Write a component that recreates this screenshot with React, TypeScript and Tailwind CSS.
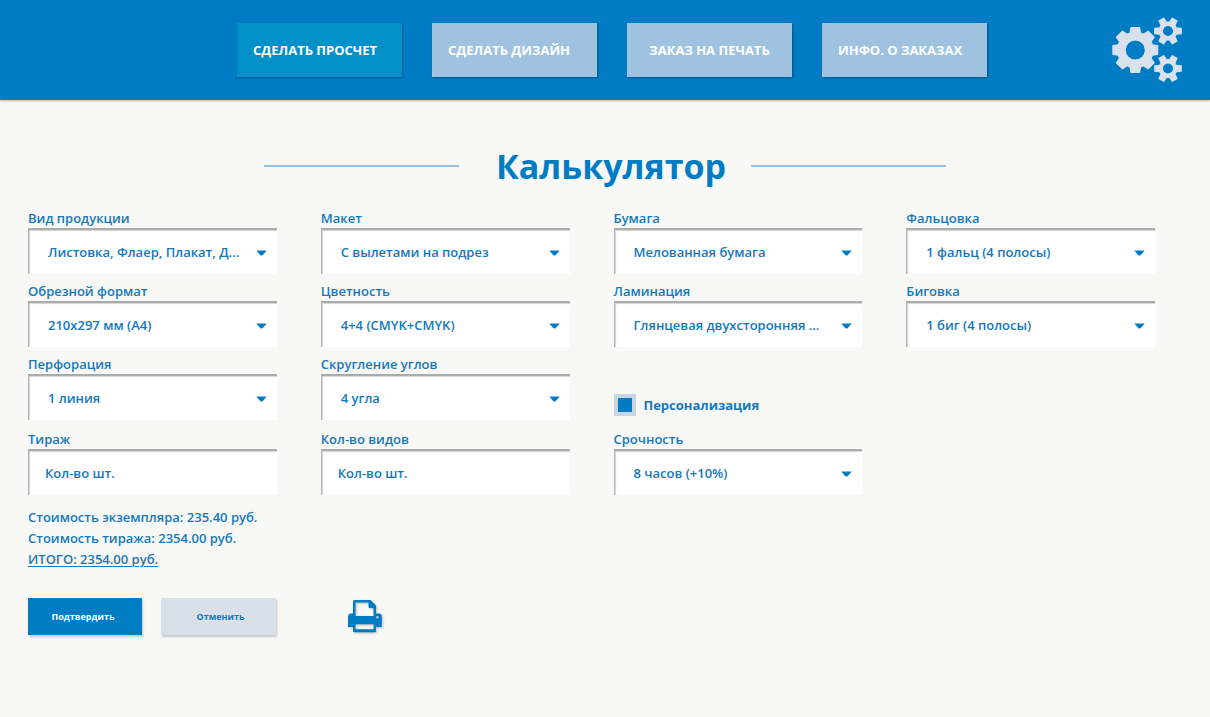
import React, { useId } from "react";

type Point = [number, number];

function gearPath(
  cx: number,
  cy: number,
  teeth: number,
  outer: number,
  body: number,
  tip: number,
  base: number,
  hole: number,
): string {
  const at = (r: number, a: number): Point => [
    cx + r * Math.cos(a),
    cy + r * Math.sin(a),
  ];
  const fmt = ([x, y]: Point) => `${x.toFixed(2)} ${y.toFixed(2)}`;
  const step = (Math.PI * 2) / teeth;
  let d = "";
  for (let i = 0; i < teeth; i++) {
    const a = i * step;
    const baseStart = fmt(at(body, a - base));
    d += i === 0 ? `M${baseStart}` : `A${body} ${body} 0 0 1 ${baseStart}`;
    d += `L${fmt(at(outer, a - tip))}L${fmt(at(outer, a + tip))}L${fmt(at(body, a + base))}`;
  }
  d += `A${body} ${body} 0 0 1 ${fmt(at(body, -base))}Z`;
  d += `M${cx - hole} ${cy}a${hole} ${hole} 0 1 0 ${hole * 2} 0a${hole} ${hole} 0 1 0 ${-hole * 2} 0Z`;
  return d;
}

function Gears() {
  return (
    <svg
      viewBox="0 0 70 66"
      className="h-[66px] w-[70px] fill-[#d8e1ec] stroke-[#d8e1ec]"
      strokeWidth="1.2"
      strokeLinejoin="round"
      fillRule="evenodd"
      aria-hidden="true"
    >
      <path d={gearPath(23.3, 33, 8, 22.8, 17.8, 0.19, 0.3, 10.1)} />
      <path d={gearPath(56, 14, 6, 13.5, 8.8, 0.2, 0.36, 5.6)} />
      <path d={gearPath(56, 51.5, 6, 13.5, 8.8, 0.2, 0.36, 5.6)} />
    </svg>
  );
}

function PrinterIcon() {
  return (
    <svg
      viewBox="0 0 34 33"
      className="h-[33px] w-[34px] fill-[#007cc5] drop-shadow-[1px_1px_1px_rgba(0,0,0,0.25)]"
      fillRule="evenodd"
      aria-hidden="true"
    >
      <path d="M6.5 0H22.500L28 5.500V13.600H30.500A3.300 3.300 0 0 1 33.800 17V27H28V30.800Q28 32.300 26.500 32.300H6.500Q5 32.300 5 30.800V27H0V17A3.300 3.300 0 0 1 3.300 13.600H5V1.500Q5 0 6.500 0ZM7.500 2.500V16H25.500V8H22Q20.500 8 20.500 6.500V2.500ZM7.500 24.300V29.300H25.500V24.300ZM29.400 16a1.300 1.300 0 1 0 0 2.600a1.300 1.300 0 1 0 0-2.600Z" />
    </svg>
  );
}

const fieldBox =
  "block h-[46px] w-full appearance-none rounded-none border-l border-t-2 border-l-[#b4b4b4] border-t-[#ababab] bg-white font-semibold text-[#1478bd] shadow-[inset_1px_1px_1px_#d4d4d4] outline-none";

function SelectField({ label, value }: { label: string; value: string }) {
  const id = useId();
  return (
    <div>
      <label htmlFor={id} className="block h-5 leading-5">
        {label}
      </label>
      <div className="relative">
        <select id={id} className={`${fieldBox} pl-[19px] pr-7 pt-0.5`}>
          <option>{value}</option>
        </select>
        <svg
          viewBox="0 0 11 6"
          className="pointer-events-none absolute right-2.5 top-[22px] h-1.5 w-[11px] fill-[#007cc5]"
          aria-hidden="true"
        >
          <path d="M0.300 0.500H10.700Q9 2.600 6.800 4.900Q5.500 6 4.200 4.900Q2 2.600 0.300 0.500Z" />
        </svg>
      </div>
    </div>
  );
}

function TextField({ label, placeholder }: { label: string; placeholder: string }) {
  const id = useId();
  return (
    <div>
      <label htmlFor={id} className="block h-5 leading-5">
        {label}
      </label>
      <input
        id={id}
        type="text"
        placeholder={placeholder}
        className={`${fieldBox} px-4 placeholder:text-[#1478bd] placeholder:opacity-100`}
      />
    </div>
  );
}

const navItem =
  "flex h-[54px] w-[165px] items-center whitespace-nowrap pt-0.5 text-[13px] font-bold text-white shadow-[1px_1px_2px_rgba(0,0,0,0.3)]";

export default function App() {
  return (
    <div className="min-h-screen bg-[#f8f8f6] font-['Open_Sans','Noto_Sans',sans-serif] text-[13px] font-semibold text-[#1478bd]">
      <header className="grid h-[100px] grid-cols-[1fr_auto_1fr] items-center bg-[#007cc5] shadow-[0_1px_2px_rgba(0,0,0,0.3)]">
        <nav className="col-start-2 flex gap-[30px] pl-3.5">
          <a href="#quote" aria-current="page" className={`${navItem} bg-[#0390c8] pl-4`}>
            СДЕЛАТЬ ПРОСЧЕТ
          </a>
          <a href="#design" className={`${navItem} bg-[#a0c2e1] pl-4`}>
            СДЕЛАТЬ ДИЗАЙН
          </a>
          <a href="#print" className={`${navItem} justify-center bg-[#a0c2e1]`}>
            ЗАКАЗ НА ПЕЧАТЬ
          </a>
          <a href="#orders" className={`${navItem} bg-[#a0c2e1] pl-4`}>
            ИНФО. О ЗАКАЗАХ
          </a>
        </nav>
        <div className="flex justify-end pr-7">
          <Gears />
        </div>
      </header>

      <main className="pb-10 pl-7 pr-[55px] pt-10">
        <div className="flex items-center justify-center pl-[27px]">
          <span className="h-0.5 w-[195px] bg-[#99c0e3]" />
          <h1 className="w-[292px] pl-3 text-center text-[34px] font-bold leading-[52px] text-[#007cc5]">
            Калькулятор
          </h1>
          <span className="h-0.5 w-[195px] bg-[#99c0e3]" />
        </div>

        <form onSubmit={(e) => e.preventDefault()} className="pt-4">
          <div className="grid grid-cols-4 gap-x-11 gap-y-[7px]">
            <SelectField label="Вид продукции" value="Листовка, Флаер, Плакат, Д..." />
            <SelectField label="Макет" value="С вылетами на подрез" />
            <SelectField label="Бумага" value="Мелованная бумага" />
            <SelectField label="Фальцовка" value="1 фальц (4 полосы)" />
            <SelectField label="Обрезной формат" value="210x297 мм (А4)" />
            <SelectField label="Цветность" value="4+4 (CMYK+CMYK)" />
            <SelectField label="Ламинация" value="Глянцевая двухсторонняя ..." />
            <SelectField label="Биговка" value="1 биг (4 полосы)" />
            <SelectField label="Перфорация" value="1 линия" />
            <SelectField label="Скругление углов" value="4 угла" />
            <label className="flex items-center gap-2 self-end pb-1 font-bold leading-[22px]">
              <input
                type="checkbox"
                defaultChecked
                className="size-[22px] appearance-none border-4 border-[#c9d5e3] bg-white checked:bg-[#007cc5]"
              />
              Персонализация
            </label>
          </div>
          <div className="grid grid-cols-4 gap-x-11 pt-[9px]">
            <TextField label="Тираж" placeholder="Кол-во шт." />
            <TextField label="Кол-во видов" placeholder="Кол-во шт." />
            <SelectField label="Срочность" value="8 часов (+10%)" />
          </div>

          <div className="pt-3 leading-[21px]">
            <p>Стоимость экземпляра: 235.40 руб.</p>
            <p>Стоимость тиража: 2354.00 руб.</p>
            <p>
              <span className="underline decoration-1 underline-offset-2">
                ИТОГО: 2354.00 руб.
              </span>
            </p>
          </div>

          <div className="flex items-center pt-7">
            <button
              type="submit"
              className="h-[37px] w-[114px] bg-[#007cc5] pr-1 text-[9px] font-bold text-white shadow-[1px_2px_2px_rgba(0,0,0,0.2)]"
            >
              Подтвердить
            </button>
            <button
              type="reset"
              className="ml-[19px] h-[37px] w-[115px] bg-[#d8e0ea] pl-1 text-[9px] font-bold shadow-[1px_2px_2px_rgba(0,0,0,0.2)]"
            >
              Отменить
            </button>
            <button type="button" aria-label="Печать" className="ml-[72px]">
              <PrinterIcon />
            </button>
          </div>
        </form>
      </main>
    </div>
  );
}
